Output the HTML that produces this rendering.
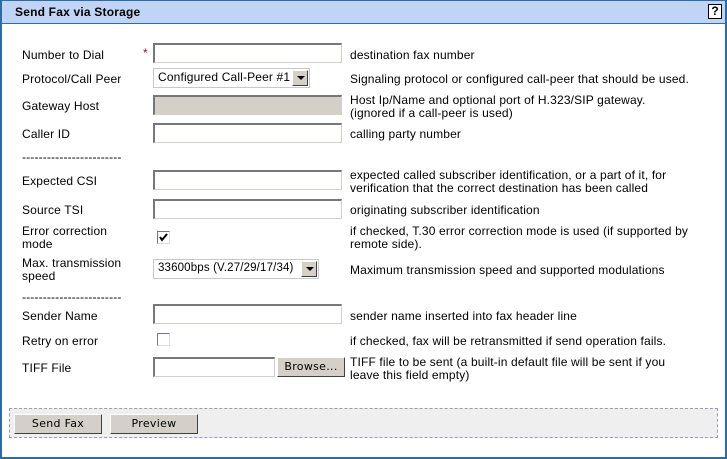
<!DOCTYPE html>
<html><head><meta charset="utf-8"><style>
*{box-sizing:border-box;margin:0;padding:0}
body{width:727px;height:459px;background:#fff;font-family:"Liberation Sans",Tahoma,sans-serif;font-size:12px;color:#000;position:relative;overflow:hidden}
.frame{position:absolute;left:0;top:0;width:727px;height:459px;border:2px solid #2e6aa6;border-top:1px solid #2e6aa6}
.hdr{position:absolute;left:2px;top:1px;width:723px;height:23px;background:#c0d4f6;border-bottom:1px solid #2e6aa6}
.hdr b{position:absolute;left:13px;top:4px;font-size:12px;letter-spacing:.2px}
.help{position:absolute;left:706px;top:3px;width:14px;height:15px;border:1px solid #000;background:#fff;font-weight:bold;font-size:12px;text-align:center;line-height:13px}
.a{position:absolute;white-space:nowrap;line-height:13px;margin-top:1px;letter-spacing:.15px}
.in{position:absolute;background:#fff;border-top:2px solid #777;border-left:2px solid #777;border-right:1px solid #d4d0c8;border-bottom:1px solid #d4d0c8}
.dis{background:#d4d0c8}
.sel{position:absolute;border:1px solid #c8c8c8;background:#fff;padding-left:4px;line-height:17px;white-space:nowrap;letter-spacing:.15px}
.sel i{position:absolute;right:1px;top:1px;width:16px;height:16px;background:#d4d0c8;border:1px solid;border-color:#fff #404040 #404040 #fff}
.sel i:after{content:"";position:absolute;left:4px;top:5px;border:4px solid transparent;border-top:4px solid #000;border-bottom:0}
.cb{position:absolute;width:13px;height:13px;border:1px solid;border-color:#777 #ddd #ddd #777;background:#fff}
.btn{position:absolute;height:20px;background:#d4d0c8;border:1px solid;border-color:#fff #404040 #404040 #fff;text-align:center;line-height:17px;font-family:"DejaVu Sans",sans-serif;font-size:11px;letter-spacing:.3px}
.foot{position:absolute;left:9px;top:408px;width:709px;height:30px;background:#efefef;border:1px dashed #9a9ac0}
</style></head><body>
<div class="frame"></div>
<div class="hdr"><b>Send Fax via Storage</b><div class="help">?</div></div>

<div class="a" style="left:22px;top:48px">Number to Dial</div>
<div class="a" style="left:143px;top:46px;color:#c00">*</div>
<div class="in" style="left:153px;top:43px;width:189px;height:20px"></div>
<div class="a" style="left:350px;top:48px">destination fax number</div>

<div class="a" style="left:22px;top:72px">Protocol/Call Peer</div>
<div class="sel" style="left:153px;top:68px;width:157px;height:20px">Configured Call-Peer #1<i></i></div>
<div class="a" style="left:350px;top:72px">Signaling protocol or configured call-peer that should be used.</div>

<div class="a" style="left:22px;top:99px">Gateway Host</div>
<div class="in dis" style="left:153px;top:95px;width:189px;height:20px"></div>
<div class="a" style="left:350px;top:93px">Host Ip/Name and optional port of H.323/SIP gateway.<br>(ignored if a call-peer is used)</div>

<div class="a" style="left:22px;top:127px">Caller ID</div>
<div class="in" style="left:153px;top:123px;width:189px;height:20px"></div>
<div class="a" style="left:350px;top:127px">calling party number</div>

<div class="a" style="left:22px;top:150px">------------------------</div>

<div class="a" style="left:22px;top:174px">Expected CSI</div>
<div class="in" style="left:153px;top:170px;width:189px;height:20px"></div>
<div class="a" style="left:350px;top:168px">expected called subscriber identification, or a part of it, for<br>verification that the correct destination has been called</div>

<div class="a" style="left:22px;top:203px">Source TSI</div>
<div class="in" style="left:153px;top:199px;width:189px;height:20px"></div>
<div class="a" style="left:350px;top:203px">originating subscriber identification</div>

<div class="a" style="left:22px;top:224px">Error correction<br>mode</div>
<div class="cb" style="left:157px;top:231px"><svg width="11" height="11" style="position:absolute;left:0;top:0"><path d="M2 5l2 3 5-6" stroke="#000" stroke-width="2" fill="none"/></svg></div>
<div class="a" style="left:350px;top:224px">if checked, T.30 error correction mode is used (if supported by<br>remote side).</div>

<div class="a" style="left:22px;top:256px">Max. transmission<br>speed</div>
<div class="sel" style="left:153px;top:259px;width:166px;height:20px;font-size:11.5px">33600bps (V.27/29/17/34)<i></i></div>
<div class="a" style="left:350px;top:263px">Maximum transmission speed and supported modulations</div>

<div class="a" style="left:22px;top:290px">------------------------</div>

<div class="a" style="left:22px;top:309px">Sender Name</div>
<div class="in" style="left:153px;top:304px;width:189px;height:20px"></div>
<div class="a" style="left:350px;top:309px">sender name inserted into fax header line</div>

<div class="a" style="left:22px;top:334px">Retry on error</div>
<div class="cb" style="left:157px;top:333px"></div>
<div class="a" style="left:350px;top:334px">if checked, fax will be retransmitted if send operation fails.</div>

<div class="a" style="left:22px;top:361px">TIFF File</div>
<div class="in" style="left:153px;top:357px;width:122px;height:20px"></div>
<div class="btn" style="left:277px;top:357px;width:68px">Browse...</div>
<div class="a" style="left:350px;top:355px">TIFF file to be sent (a built-in default file will be sent if you<br>leave this field empty)</div>

<div class="foot"></div>
<div class="btn" style="left:14px;top:414px;width:88px">Send Fax</div>
<div class="btn" style="left:110px;top:414px;width:88px">Preview</div>
</body></html>
